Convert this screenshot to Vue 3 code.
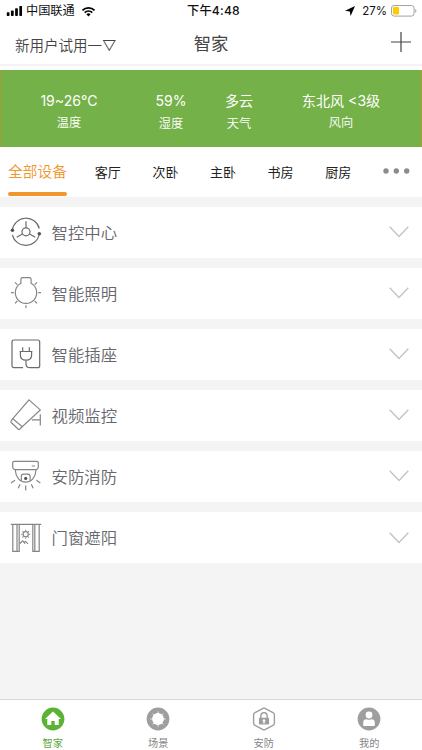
<template>
  <div class="screen">
    <div class="status-bar">
      <div class="status-left">
        <svg class="signal" viewBox="0 0 17 11">
          <rect x="0" y="7" width="3" height="4" rx="0.8" />
          <rect x="4.6" y="5" width="3" height="6" rx="0.8" />
          <rect x="9.2" y="2.6" width="3" height="8.4" rx="0.8" />
          <rect x="13.8" y="0" width="3" height="11" rx="0.8" />
        </svg>
        <span class="carrier">中国联通</span>
        <svg class="wifi" viewBox="0 0 16 12">
          <path d="M1.4 4.7a9.6 9.6 0 0 1 13.2 0M3.9 7.2a6 6 0 0 1 8.2 0" />
          <path class="fill" d="M5.7 9a3.4 3.4 0 0 1 4.6 0L8 11.5z" />
        </svg>
      </div>
      <span class="clock">下午4:48</span>
      <div class="status-right">
        <svg class="location" viewBox="0 0 10 10">
          <path d="M10 0L5.6 10L4.8 5.4L0 4.7z" />
        </svg>
        <span class="percent">27%</span>
        <svg class="battery" viewBox="0 0 26 12">
          <rect class="shell" x="0.5" y="0.5" width="22.6" height="10.6" rx="2.6" />
          <rect class="charge" x="2" y="2" width="6" height="7.6" rx="1" />
          <path class="cap" d="M24.2 4v3.8c1.7-.5 1.7-3.3 0-3.8z" />
        </svg>
      </div>
    </div>

    <header class="nav-bar">
      <span class="account">新用户试用一▽</span>
      <h1 class="title">智家</h1>
      <svg class="add" viewBox="0 0 20 20">
        <path d="M10 0v20M0 10h20" />
      </svg>
    </header>

    <section class="weather">
      <div v-for="item in weather" :key="item.label" class="weather-item" :class="item.name">
        <span class="value">{{ item.value }}</span>
        <span class="label">{{ item.label }}</span>
      </div>
    </section>

    <nav class="rooms">
      <span
        v-for="room in rooms"
        :key="room"
        class="room"
        :class="{ active: room === activeRoom }"
        @click="activeRoom = room"
      >{{ room }}</span>
      <svg class="more" viewBox="0 0 27 6">
        <circle cx="3" cy="3" r="2.7" />
        <circle cx="13.3" cy="3" r="2.7" />
        <circle cx="23.7" cy="3" r="2.7" />
      </svg>
    </nav>

    <main class="devices">
      <div v-for="device in devices" :key="device.name" class="device">
        <svg class="device-icon" :class="device.icon" viewBox="0 0 32 32">
          <template v-if="device.icon === 'control'">
            <path d="M2.3 14A13.8 13.8 0 0 1 29.3 12.5M2.4 19A13.8 13.8 0 0 0 29.3 18.5" />
            <circle cx="16" cy="15.8" r="4" />
            <path d="M16 5.2v6.6M12.5 17.9l-5.8 3.3M19.5 17.9l5.8 3.3" />
            <circle class="dot" cx="2.4" cy="14.2" r="1.8" />
            <circle class="dot" cx="29.3" cy="17.8" r="1.8" />
          </template>
          <template v-else-if="device.icon === 'light'">
            <path d="M10.9 6.3V2.2q0-1.6 1.6-1.6h7q1.6 0 1.6 1.6v4.1A10.7 10.7 0 1 1 10.9 6.3z" />
            <path d="M1 15.6h2.8M28.2 15.6H31M16 28.2V31M5 5.3l2.3 2.3M27 5.3l-2.3 2.3M5 26.3L7.3 24M27 26.3L24.7 24" />
          </template>
          <template v-else-if="device.icon === 'socket'">
            <path d="M13 29.7H4q-2 0-2-2V4q0-2 2-2h23.7q2 0 2 2v23.7q0 2-2 2H20q-4 0-4-4v-3.5" />
            <path d="M12.7 9.2v4.3M19.3 9.2v4.3M9.6 13.5h12.8M10.4 13.5V17q0 5.2 5.6 5.2t5.6-5.2v-3.5" />
          </template>
          <template v-else-if="device.icon === 'camera'">
            <path d="M19 .9l11.3 10L12.2 27.7L2.8 19.6z" />
            <path d="M2.8 19.6L1 22.2q-.4.7.2 1.3l7.1 6.7q.7.6 1.4 0l2.5-2.5" />
            <path d="M21.8 20.8h8.5M30.3 15.2v11.3" />
          </template>
          <template v-else-if="device.icon === 'security'">
            <path d="M4.2 1.4h22.6q1.5 0 1.5 1.5v3.6q0 3.2-3.2 3.2H5.9q-3.2 0-3.2-3.2V2.9q0-1.5 1.5-1.5zM21.7 6H25" />
            <path d="M5.2 9.8C5.8 17 9.6 22.2 15.7 22.2S25.6 17 26.1 9.8" />
            <path d="M11.3 21v-4.6q0-2.3 2.3-2.3h4.2q2.3 0 2.3 2.3V21" />
            <circle class="dot" cx="15.7" cy="18.4" r="1.6" />
            <path d="M1 22.9l4-2.7M8.2 28.2l1.9-4M15.7 25.4v5M23.2 28.2l-1.9-4M30.4 22.9l-4-2.7" />
          </template>
          <template v-else>
            <path d="M.8 2.3h30.4M2.8 2.3v27h6.4v-27M7 2.3v27M22.8 2.3v27h6.4v-27M24.8 2.3v27" />
            <circle cx="15.7" cy="12.3" r="2.6" />
            <path d="M15.7 7.8v1M15.7 15.8v1M11.2 12.3h1M19.2 12.3h1M12.5 9.1l.7.7M18.2 14.8l.7.7M12.5 15.5l.7-.7M18.2 9.8l.7-.7" />
            <path d="M9.6 21.7l3.1-2.9 2.4 2.8M14.2 20.3l1.4-.9 2.4 2.4" />
          </template>
        </svg>
        <span class="device-name">{{ device.name }}</span>
        <svg class="chevron" viewBox="0 0 20 12">
          <path d="M.7.8L10 10.6 19.3.8" />
        </svg>
      </div>
    </main>

    <footer class="tab-bar">
      <div class="tab active">
        <svg class="tab-icon" viewBox="0 0 24 24">
          <circle cx="12" cy="12" r="11.4" />
          <path class="cut" d="M12 4.6l8 7.3h-2.3V18h-4v-4h-3.4v4h-4v-6.1H4z" />
        </svg>
        <span>智家</span>
      </div>
      <div class="tab">
        <svg class="tab-icon" viewBox="0 0 24 24">
          <circle cx="12" cy="12" r="11.4" />
          <circle class="cut" cx="12" cy="12" r="5.9" />
          <path class="beam" d="M12 4.4v15.2M4.4 12h15.2M6.6 6.6l10.8 10.8M17.4 6.6L6.6 17.4" />
        </svg>
        <span>场景</span>
      </div>
      <div class="tab">
        <svg class="tab-icon" viewBox="0 0 24 24">
          <path class="outline" d="M11 1.3q1-.6 2 0l8.4 4.6q1 .5 1 1.6v9q0 1.1-1 1.6L13 22.7q-1 .6-2 0l-8.4-4.6q-1-.5-1-1.6v-9q0-1.1 1-1.6z" />
          <rect x="6.9" y="10.8" width="10.2" height="6.8" rx="0.8" />
          <path class="outline" d="M8.8 11V9a3.2 3.2 0 0 1 6.4 0v2" />
          <path class="cut" d="M12 12.2a1.4 1.4 0 0 1 .7 2.6v1.6h-1.4v-1.6a1.4 1.4 0 0 1 .7-2.6z" />
        </svg>
        <span>安防</span>
      </div>
      <div class="tab">
        <svg class="tab-icon" viewBox="0 0 24 24">
          <circle cx="12" cy="12" r="11.4" />
          <circle class="cut" cx="12" cy="8" r="3.4" />
          <path class="cut" d="M6.2 18.2v-2.6q0-3.4 3.4-3.4 2.4 1 4.8 0 3.4 0 3.4 3.4v2.6q0 .8-.8.8H7q-.8 0-.8-.8z" />
        </svg>
        <span>我的</span>
      </div>
    </footer>
  </div>
</template>

<script setup>
import { ref } from 'vue'

const weather = [
  { name: 'temperature', value: '19~26°C', label: '温度' },
  { name: 'humidity', value: '59%', label: '湿度' },
  { name: 'sky', value: '多云', label: '天气' },
  { name: 'wind', value: '东北风 <3级', label: '风向' }
]

const rooms = ['全部设备', '客厅', '次卧', '主卧', '书房', '厨房']
const activeRoom = ref('全部设备')

const devices = [
  { name: '智控中心', icon: 'control' },
  { name: '智能照明', icon: 'light' },
  { name: '智能插座', icon: 'socket' },
  { name: '视频监控', icon: 'camera' },
  { name: '安防消防', icon: 'security' },
  { name: '门窗遮阳', icon: 'curtain' }
]
</script>

<style>
body {
  margin: 0;
}
</style>

<style scoped>
.screen {
  display: flex;
  flex-direction: column;
  width: 422px;
  height: 750px;
  overflow: hidden;
  background: #f4f4f4;
  font-family: Inter, "Noto Sans CJK SC", sans-serif;
  white-space: nowrap;
}

svg {
  display: block;
  flex: none;
}

.status-bar {
  display: grid;
  grid-template-columns: 1fr auto 1fr;
  align-items: center;
  height: 22px;
  padding: 0 5px 0 6px;
  background: #fff;
  color: #111;
  font-size: 12px;
  line-height: 22px;
}

.status-left,
.status-right {
  display: flex;
  align-items: center;
}

.status-right {
  justify-content: flex-end;
}

.signal {
  width: 17px;
  height: 10px;
}

.carrier {
  margin-left: 3px;
  font-size: 12.2px;
}

.wifi {
  width: 15px;
  height: 11px;
  margin-left: 6px;
}

.wifi path {
  fill: none;
  stroke: #000;
  stroke-width: 2;
}

.wifi .fill {
  fill: #000;
  stroke: none;
}

.clock {
  padding-left: 4px;
  font-size: 12.2px;
  font-weight: 500;
  letter-spacing: 0.2px;
}

.location {
  width: 10px;
  height: 10px;
}

.percent {
  margin: 0 4px 0 7px;
  font-size: 11.5px;
}

.battery {
  width: 26px;
  height: 12px;
}

.battery .shell {
  fill: #fff;
  stroke: #999;
  stroke-width: 0.9;
}

.battery .charge {
  fill: #fc0;
}

.battery .cap {
  fill: #aaa;
}

.nav-bar {
  display: grid;
  grid-template-columns: 1fr auto 1fr;
  align-items: center;
  height: 42px;
  padding: 0 11px 0 15px;
  border-bottom: 2px solid #f4f4f8;
  background: #fff;
  color: #444;
}

.account {
  padding-top: 2px;
  font-size: 14.5px;
  font-weight: 350;
}

.title {
  margin: 0;
  padding: 0 4px 1px 0;
  font-size: 17.3px;
  font-weight: 400;
}

.add {
  justify-self: end;
  width: 20px;
  height: 20px;
  margin-bottom: 3px;
}

.add path {
  stroke: #444;
  stroke-width: 1.2;
}

.weather {
  display: grid;
  grid-template-columns: 134px 70px 66px 138px;
  height: 77px;
  padding: 0 12px 0 1px;
  border-top: 4px solid #fff;
  background: linear-gradient(90deg, #a79a39 1px, #74b148 1px 421px, #b39a35 421px);
  color: #fff;
}

.weather-item {
  display: flex;
  flex-direction: column;
  align-items: center;
  padding: 20px 0 0 2px;
}

.value {
  height: 22px;
  font-size: 14.1px;
  line-height: 21px;
}

.label {
  font-size: 12.2px;
  font-weight: 350;
  line-height: 22px;
}

.humidity .label,
.sky .label {
  padding-top: 1px;
}

.rooms {
  display: flex;
  height: 50px;
  padding-left: 8px;
  background: #fff;
}

.room {
  box-sizing: border-box;
  width: 57.6px;
  color: #222;
  font-size: 13px;
  line-height: 51px;
  text-align: center;
}

.room.active {
  display: flex;
  flex-direction: column;
  width: 59px;
  height: 49px;
  margin-right: 12px;
  color: #f0962d;
  font-size: 14.7px;
  font-weight: 350;
}

.room.active::after {
  height: 4px;
  margin-top: -6px;
  border-radius: 2px;
  background: #f0962d;
  content: "";
}

.more {
  width: 27px;
  height: 6px;
  margin: 21px 0 0 15.6px;
  fill: #8c8c8c;
}

.devices {
  display: flex;
  flex-direction: column;
  gap: 10.1px;
  padding-top: 9.6px;
}

.device {
  display: flex;
  align-items: center;
  box-sizing: border-box;
  height: 51px;
  padding: 0 13px 0 10px;
  background: #fff;
}

.device-icon {
  width: 32px;
  height: 32px;
  fill: none;
  stroke: #858588;
  stroke-width: 1.2;
}

.device-icon.control,
.device-icon.socket {
  stroke: #6c6c6c;
}

.device-icon .dot {
  fill: #555;
  stroke: none;
}

.device-name {
  margin-left: 9.5px;
  padding-bottom: 1px;
  color: #66666c;
  font-size: 16.4px;
  font-weight: 350;
}

.chevron {
  width: 20px;
  height: 12px;
  margin-left: auto;
}

.chevron path {
  fill: none;
  stroke: #c4c4c4;
  stroke-width: 1.4;
}

.tab-bar {
  display: grid;
  grid-template-columns: repeat(4, 1fr);
  box-sizing: border-box;
  height: 51px;
  margin-top: auto;
  border-top: 1px solid #d8d8d8;
  background: #fff;
}

.tab {
  display: flex;
  flex-direction: column;
  align-items: center;
  padding-top: 7px;
  color: #858585;
  font-size: 10.2px;
  line-height: 14px;
}

.tab span {
  margin-top: 4.5px;
}

.tab.active {
  color: #5aa83a;
}

.tab-icon {
  width: 24px;
  height: 24px;
  fill: #9e9e9e;
}

.tab.active .tab-icon {
  fill: #5bb333;
}

.tab-icon .cut {
  fill: #fff;
}

.tab-icon .beam {
  stroke: #fff;
  stroke-width: 0.8;
}

.tab-icon .outline {
  fill: none;
  stroke: #9e9e9e;
  stroke-width: 1.4;
}
</style>
